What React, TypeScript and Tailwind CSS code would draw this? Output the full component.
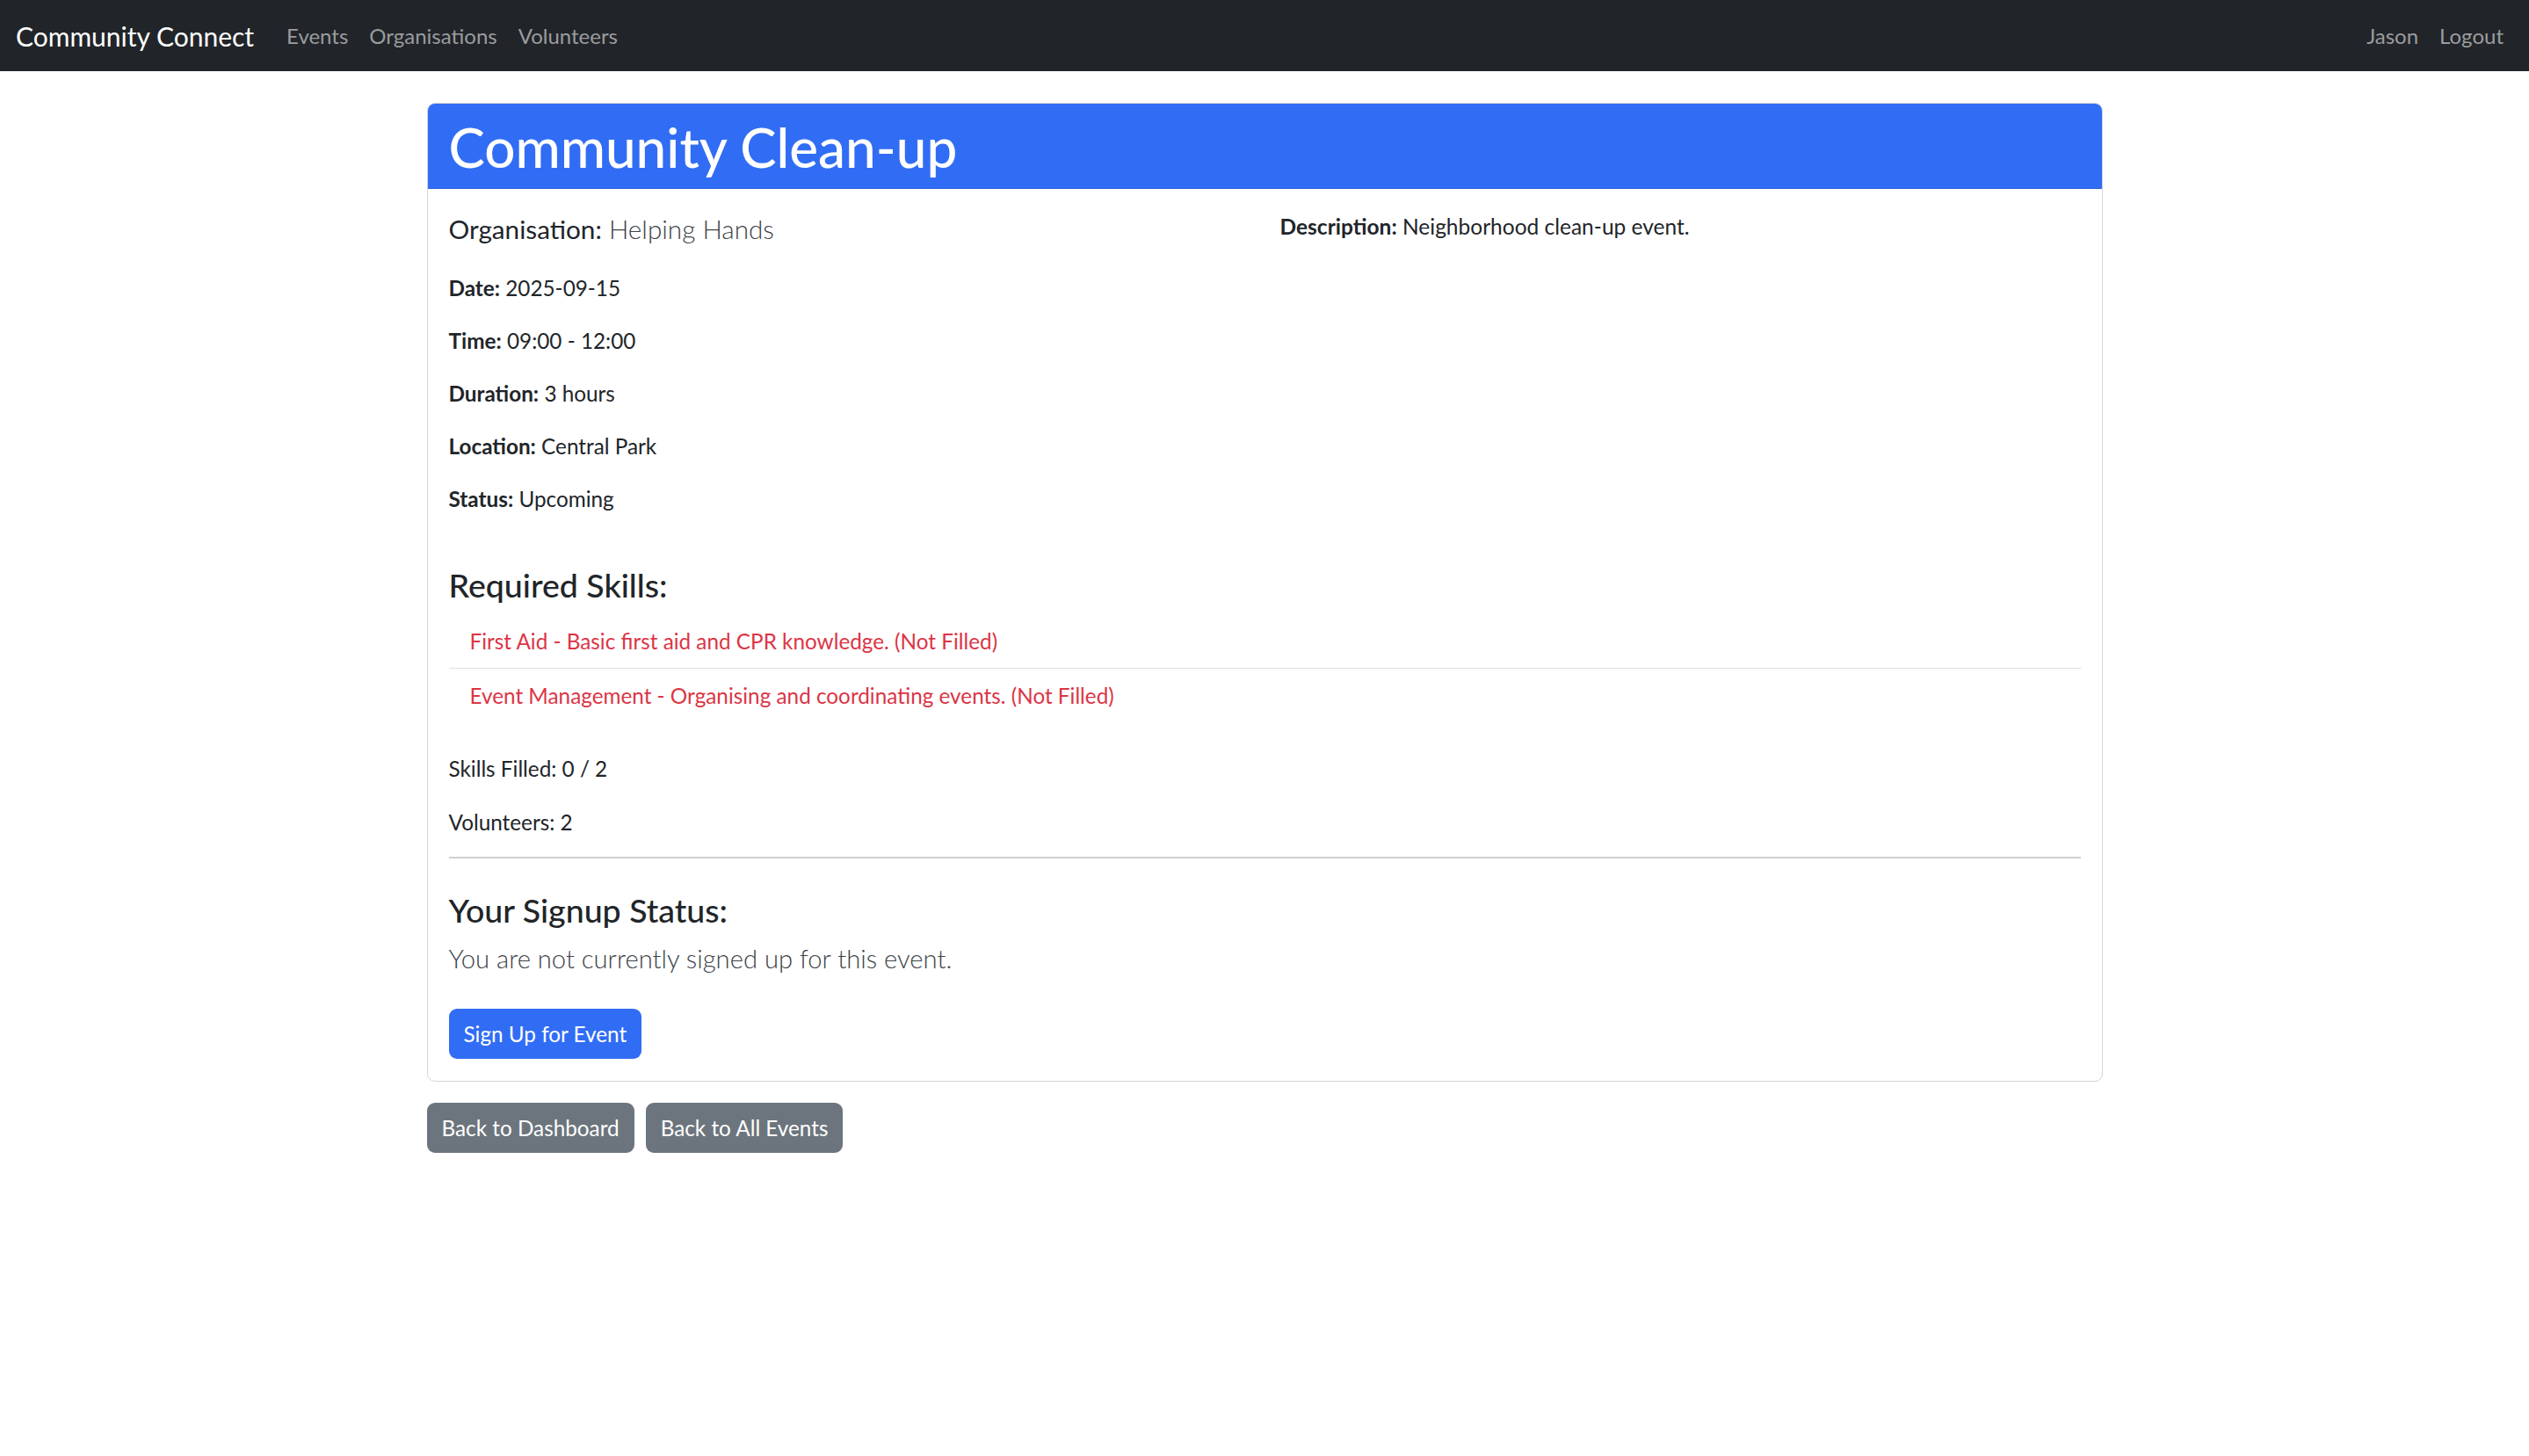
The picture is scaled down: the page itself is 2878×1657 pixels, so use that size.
import React from "react";

const font = { fontFamily: '"Lato", "Open Sans", "Liberation Sans", sans-serif' };

function Nav() {
  return (
    <nav className="h-[81px] bg-[#212529] flex items-center justify-between pl-[18px] pr-[17px]">
      <div className="flex items-center">
        <span className="text-[30px] text-white leading-[44px] mr-[25px]">Community Connect</span>
        <a className="text-[24px] text-[#9a9c9f] px-[12px]">Events</a>
        <a className="text-[24px] text-[#9a9c9f] px-[12px]">Organisations</a>
        <a className="text-[24px] text-[#9a9c9f] px-[12px]">Volunteers</a>
      </div>
      <div className="flex items-center">
        <a className="text-[24px] text-[#9a9c9f] px-[12px]">Jason</a>
        <a className="text-[24px] text-[#9a9c9f] px-[12px]">Logout</a>
      </div>
    </nav>
  );
}

function Field({ label, value }: { label: string; value: string }) {
  return (
    <p className="text-[24.3px] leading-[35px] mb-[25px] text-[#212529]">
      <strong className="font-bold">{label}</strong> {value}
    </p>
  );
}

export default function App() {
  return (
    <div style={font} className="min-h-screen bg-white text-[#212529]">
      <Nav />
      <div className="w-[1907px] mx-auto mt-[36px]">
        <div className="border border-[#d3d4d5] rounded-[9px] overflow-hidden">
          <div className="bg-[#316df4] h-[97px] px-[24px] flex items-center border-b border-[#2a62dc]">
            <h1 className="text-[62px] font-medium text-white leading-[72px] mt-[2px]">Community Clean-up</h1>
          </div>
          <div className="pt-[24px] px-[24px] pb-[25px]">
            <div className="grid grid-cols-2 gap-x-[35px]">
              <div>
                <p className="text-[29.7px] font-light leading-[44px] mb-[27px]">
                  <span className="font-normal">Organisation:</span>{" "}
                  <span className="text-[#3d4348]">Helping Hands</span>
                </p>
                <Field label="Date:" value="2025-09-15" />
                <Field label="Time:" value="09:00 - 12:00" />
                <Field label="Duration:" value="3 hours" />
                <Field label="Location:" value="Central Park" />
                <Field label="Status:" value="Upcoming" />
              </div>
              <div>
                <p className="text-[24.5px] leading-[35px] mt-[1px]">
                  <strong className="font-bold">Description:</strong> Neighborhood clean-up event.
                </p>
              </div>
            </div>
            <h4 className="text-[37.5px] font-medium leading-[42px] mt-[35px] mb-[12px]">Required Skills:</h4>
            <ul className="mb-[35px]">
              <li className="px-[24px] py-[13px] text-[24.3px] leading-[35px] text-[#dc3545] border-b border-[#dee2e6]">
                First Aid - Basic first aid and CPR knowledge. (Not Filled)
              </li>
              <li className="px-[24px] py-[13px] text-[24.3px] leading-[35px] text-[#dc3545]">
                Event Management - Organising and coordinating events. (Not Filled)
              </li>
            </ul>
            <p className="text-[24.3px] leading-[35px] mb-[26px]">Skills Filled: 0 / 2</p>
            <p className="text-[24.3px] leading-[35px]">Volunteers: 2</p>
            <hr className="mt-[22px] mb-[38px] border-0 border-t-2 border-[#cfd0d1]" />
            <h4 className="text-[37.5px] font-medium leading-[42px] mb-[12px]">Your Signup Status:</h4>
            <p className="text-[29.2px] font-light leading-[44px] mb-[35px] text-[#3d4348]">
              You are not currently signed up for this event.
            </p>
            <button className="h-[57px] px-[17px] rounded-[9px] bg-[#316df4] text-white text-[24.3px] leading-[35px]">
              Sign Up for Event
            </button>
          </div>
        </div>
        <div className="flex gap-[13px] mt-[24px]">
          <button className="h-[57px] px-[17px] rounded-[9px] bg-[#6c757d] text-white text-[24.3px] leading-[35px]">
            Back to Dashboard
          </button>
          <button className="h-[57px] px-[17px] rounded-[9px] bg-[#6c757d] text-white text-[24.3px] leading-[35px]">
            Back to All Events
          </button>
        </div>
      </div>
    </div>
  );
}
